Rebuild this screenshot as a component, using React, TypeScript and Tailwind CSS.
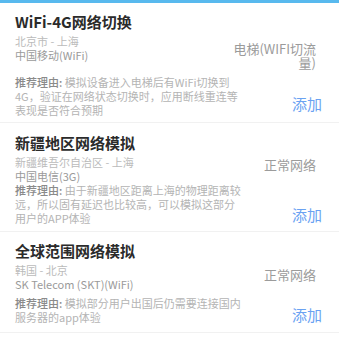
import React, { useEffect } from "react";

type Item = {
  title: string;
  location: string;
  carrier: string;
  network: string[];
  reason: string[];
  cardPt: string;
  cardPb: string;
  netMt: string;
  reasonMt: string;
  addMb: string;
};

const items: Item[] = [
  {
    title: "WiFi-4G网络切换",
    location: "北京市 - 上海",
    carrier: "中国移动(WiFi)",
    network: ["电梯(WIFI切流", "量)"],
    reason: [
      "模拟设备进入电梯后有WiFi切换到",
      "4G，验证在网络状态切换时，应用断线重连等",
      "表现是否符合预期",
    ],
    cardPt: "pt-[8px]",
    cardPb: "pb-[5px]",
    netMt: "mt-[7px]",
    reasonMt: "mt-[5px]",
    addMb: "mb-[6px]",
  },
  {
    title: "新疆地区网络模拟",
    location: "新疆维吾尔自治区 - 上海",
    carrier: "中国电信(3G)",
    network: ["正常网络"],
    reason: [
      "由于新疆地区距离上海的物理距离较",
      "远，所以固有延迟也比较高，可以模拟这部分",
      "用户的APP体验",
    ],
    cardPt: "pt-[9px]",
    cardPb: "pb-[6px]",
    netMt: "mt-[2px]",
    reasonMt: "mt-[0px]",
    addMb: "mb-[3px]",
  },
  {
    title: "全球范围网络模拟",
    location: "韩国 - 北京",
    carrier: "SK Telecom (SKT)(WiFi)",
    network: ["正常网络"],
    reason: ["模拟部分用户出国后仍需要连接国内", "服务器的app体验"],
    cardPt: "pt-[8px]",
    cardPb: "pb-[8px]",
    netMt: "mt-[4px]",
    reasonMt: "mt-[5px]",
    addMb: "mb-[2px]",
  },
];

function Card({ item }: { item: Item }) {
  return (
    <div className={`border-b border-[#f1f1f1] pl-[15px] pr-[17px] ${item.cardPt} ${item.cardPb}`}>
      <div className="text-[15px] leading-[22px] font-semibold text-[#2b2b2b]">{item.title}</div>
      <div className="mt-[2px] flex items-start justify-between">
        <div className="flex flex-col">
          <div className="text-[11px] leading-[13.5px] text-[#bbbbbb]">{item.location}</div>
          <div className="text-[11px] leading-[13.5px] text-[#9a9a9a]">{item.carrier}</div>
        </div>
        <div className={`flex flex-col items-end pr-[6px] text-[13px] leading-[14px] text-[#9b9b9b] ${item.netMt}`}>
          {item.network.map((l) => (
            <div key={l} className="whitespace-nowrap">
              {l}
            </div>
          ))}
        </div>
      </div>
      <div className={`flex items-end justify-between ${item.reasonMt}`}>
        <div className="flex flex-col text-[11px] leading-[14px] text-[#b4b4b4]">
          {item.reason.map((l, i) => (
            <div key={i} className="whitespace-nowrap">
              {i === 0 && <span className="font-medium text-[#8a8a8a]">推荐理由: </span>}
              {l}
            </div>
          ))}
        </div>
        <div className={`text-[15px] leading-[14px] text-[#6aa2f2] ${item.addMb}`}>添加</div>
      </div>
    </div>
  );
}

export default function App() {
  useEffect(() => {
    document.documentElement.classList.add("overflow-hidden");
  }, []);
  return (
    <div className="h-[339px] w-full overflow-hidden bg-white font-['Noto_Sans_CJK_SC',sans-serif]">
      <div className="h-[3px] bg-[#58b9ee]" />
      {items.map((it) => (
        <Card key={it.title} item={it} />
      ))}
    </div>
  );
}
